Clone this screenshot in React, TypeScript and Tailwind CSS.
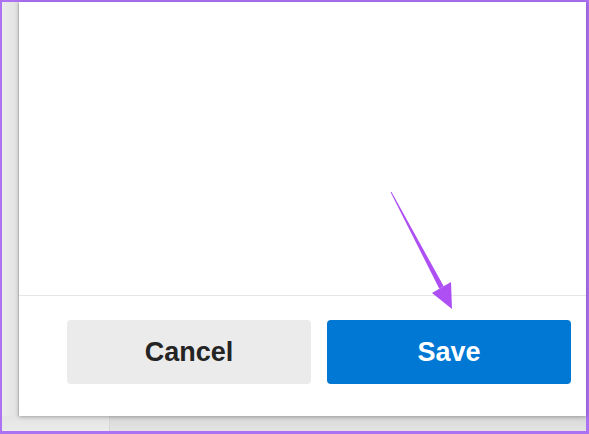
import React from 'react';

export default function SaveDialog() {
  return (
    <div className="relative w-[589px] h-[434px] bg-[#ac72f4] pt-[2px] pl-[2px] pr-[3px] pb-[3px] font-['Liberation_Sans',Arial,sans-serif]">
      <div className="flex flex-col w-full h-full bg-[#e3e3e3]">
        {/* Main row: window edge + dialog */}
        <div className="flex h-[414px]">
          <div className="w-[17px] bg-gradient-to-r from-[#ececec] to-[#e2e2e2] border-r border-[#cfcfcf]" />
          <div className="flex-1 flex flex-col bg-white shadow-[0_1px_4px_rgba(0,0,0,0.3)] z-10">
            <div className="h-[293px]" />
            <div className="border-t border-[#e6e6e6] pt-6 pb-8 pl-12 flex gap-4">
              <button className="w-[244px] h-16 rounded bg-[#ebebeb] text-[#242424] text-[27px] font-bold">
                Cancel
              </button>
              <button className="w-[244px] h-16 rounded bg-[#0078d4] text-white text-[27px] font-bold">
                Save
              </button>
            </div>
          </div>
        </div>
        {/* Window behind */}
        <div className="flex flex-1">
          <div className="w-[108px] bg-gradient-to-b from-[#e4e4e4] to-[#ebebeb] border-r border-[#d6d6d6]" />
          <div className="flex-1 bg-gradient-to-b from-[#d8d8d8] to-[#e4e4e4]" />
        </div>
      </div>

      {/* Annotation arrow */}
      <svg className="absolute left-0 top-0 z-20 pointer-events-none" width="589" height="434" viewBox="0 0 589 434">
        <polygon
          points="390.6,192.3 391.4,191.8 443.7,286.3 439.3,288.7"
          fill="#ad4ff2"
        />
        <polygon points="432,293 452,309 451,282" fill="#ad4ff2" />
      </svg>
    </div>
  );
}
